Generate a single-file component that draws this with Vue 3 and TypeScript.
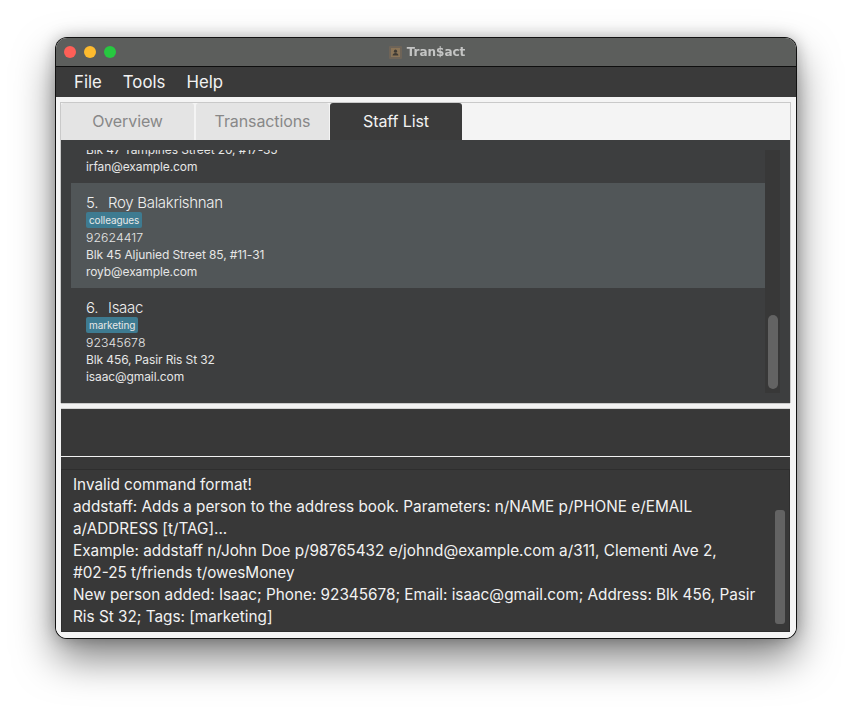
<script setup lang="ts">
interface Staff { index: number; name: string; tag: string; phone: string; address: string; email: string; selected?: boolean }
const staff: Staff[] = [
  { index: 4, name: 'Irfan Ibrahim', tag: 'classmates', phone: '92492021', address: 'Blk 47 Tampines Street 20, #17-35', email: 'irfan@example.com' },
  { index: 5, name: 'Roy Balakrishnan', tag: 'colleagues', phone: '92624417', address: 'Blk 45 Aljunied Street 85, #11-31', email: 'royb@example.com', selected: true },
  { index: 6, name: 'Isaac', tag: 'marketing', phone: '92345678', address: 'Blk 456, Pasir Ris St 32', email: 'isaac@gmail.com' }
]
const tabs = ['Overview', 'Transactions', 'Staff List']
const resultLines = [
  'Invalid command format!',
  'addstaff: Adds a person to the address book. Parameters: n/NAME p/PHONE e/EMAIL',
  'a/ADDRESS [t/TAG]...',
  'Example: addstaff n/John Doe p/98765432 e/johnd@example.com a/311, Clementi Ave 2,',
  '#02-25 t/friends t/owesMoney',
  'New person added: Isaac; Phone: 92345678; Email: isaac@gmail.com; Address: Blk 456, Pasir',
  'Ris St 32; Tags: [marketing]'
]
</script>

<template>
  <div class="page">
    <div class="window">
      <header class="titlebar">
        <div class="lights">
          <span class="light red"></span>
          <span class="light yellow"></span>
          <span class="light green"></span>
        </div>
        <div class="title">
          <svg class="app-icon" width="13" height="13" viewBox="0 0 13 13">
            <rect width="13" height="13" rx="1" fill="#6e6458" />
            <rect x="2" y="2" width="9" height="9" fill="#8b7558" />
            <circle cx="6.5" cy="5.2" r="1.6" fill="#3e3a34" />
            <path d="M3.6 9.6h5.8c0-1.6-1.2-2.5-2.9-2.5s-2.9.9-2.9 2.5z" fill="#3e3a34" />
          </svg>
          <span>Tran$act</span>
        </div>
        <div></div>
      </header>
      <nav class="menubar">
        <span>File</span>
        <span>Tools</span>
        <span>Help</span>
      </nav>
      <main class="body">
        <section class="tabpane">
          <div class="tabs">
            <div v-for="(t, i) in tabs" :key="t" class="tab" :class="{ active: i === 2 }">{{ t }}</div>
          </div>
          <div class="listarea">
            <div class="list">
              <article v-for="p in staff" :key="p.index" class="card" :class="{ selected: p.selected }">
                <div class="name"><span class="num">{{ p.index }}.</span>{{ p.name }}</div>
                <div class="tagrow"><span class="tag">{{ p.tag }}</span></div>
                <div class="line phone">{{ p.phone }}</div>
                <div class="line">{{ p.address }}</div>
                <div class="line">{{ p.email }}</div>
              </article>
            </div>
            <div class="track"><div class="thumb"></div></div>
          </div>
        </section>
        <div class="divider"></div>
        <div class="command"></div>
        <div class="resultwrap">
          <div class="result">
            <div class="resulttext">
              <div v-for="l in resultLines" :key="l">{{ l }}</div>
            </div>
            <div class="rtrack"><div class="rthumb"></div></div>
          </div>
        </div>
      </main>
    </div>
  </div>
</template>

<style>
html, body { margin: 0; background: #fff; }
</style>

<style scoped>
.page {
  width: 852px;
  height: 712px;
  box-sizing: border-box;
  padding: 38px 56px 74px;
  overflow: hidden;
  font-family: Inter, "Liberation Sans", sans-serif;
  background: #fff;
}
.window {
  width: 740px;
  height: 600px;
  display: flex;
  flex-direction: column;
  border-radius: 11px;
  overflow: hidden;
  box-shadow: 0 0 0 1px #111, 0 20px 40px rgba(0, 0, 0, 0.5), 0 0 16px rgba(0, 0, 0, 0.28);
  background: #f4f4f4;
}
.titlebar {
  height: 28px;
  flex: none;
  display: grid;
  grid-template-columns: 1fr auto 1fr;
  align-items: center;
  background: #5c5e5c;
  border-bottom: 1px solid #0e0e0e;
}
.lights { display: flex; gap: 8px; padding-left: 8px; }
.light { width: 12px; height: 12px; border-radius: 50%; }
.red { background: #fe5f57; }
.yellow { background: #febb2e; }
.green { background: #27c840; }
.title {
  display: flex;
  align-items: center;
  gap: 5px;
  color: #c4c5c4;
  font-size: 12px;
  font-weight: 700;
  font-family: "DejaVu Sans", sans-serif;
  margin-left: 2px;
  filter: blur(0.3px);
}
.app-icon { flex: none; }
.menubar {
  height: 30px;
  flex: none;
  display: flex;
  align-items: center;
  gap: 21px;
  padding-left: 18px;
  background: #3a3a3a;
  color: #f2f2f2;
  font-size: 16.8px;
}
.body {
  flex: 1;
  min-height: 0;
  display: flex;
  flex-direction: column;
  padding: 5px 5px 6px 4px;
  background: #f4f4f4;
}
.tabpane {
  height: 301px;
  flex: none;
  box-sizing: border-box;
  border: 1px solid #c9c9c9;
  border-bottom: 0;
  display: flex;
  flex-direction: column;
  background: #f4f4f4;
}
.tabs { height: 37px; flex: none; display: flex; }
.tab {
  width: 133px;
  box-sizing: border-box;
  padding-bottom: 1px;
  margin-right: 2px;
  display: flex;
  align-items: center;
  justify-content: center;
  background: #e4e4e4;
  color: #888;
  font-size: 16px;
  letter-spacing: -0.1px;
  border-radius: 3px 3px 0 0;
}
.tab:nth-child(2) { margin-right: 1px; }
.tab.active { width: 132px; background: #3b3b3b; color: #f2f2f2; }
.listarea {
  flex: 1;
  min-height: 0;
  display: flex;
  padding: 10px;
  background: #3d3e3f;
}
.list {
  flex: 1;
  min-width: 0;
  display: flex;
  flex-direction: column;
  justify-content: flex-end;
  overflow: hidden;
}
.card {
  height: 105px;
  flex: none;
  box-sizing: border-box;
  padding: 10px 15px 0;
  color: #f0f0f0;
}
.card.selected { background: #515658; }
.name {
  font-size: 15px;
  font-weight: 300;
  letter-spacing: -0.3px;
  line-height: 19px;
  height: 19px;
  white-space: pre;
  color: #efefef;
}
.num { display: inline-block; width: 22px; }
.tagrow { height: 17px; display: flex; align-items: flex-start; }
.tag {
  font-size: 10px;
  letter-spacing: -0.1px;
  line-height: 16px;
  padding: 0 3px;
  border-radius: 2px;
  background: #3e7b91;
  color: #e8e8e8;
}
.line { font-size: 12px; letter-spacing: -0.1px; line-height: 17px; height: 17px; color: #e6e6e6; }
.line.phone { font-size: 12.3px; letter-spacing: 0.05px; font-weight: 300; }
.track { width: 15px; flex: none; display: flex; flex-direction: column; justify-content: flex-end; background: #383838; }
.thumb { width: 10px; height: 74px; margin: 0 0 4px 3px; border-radius: 5px; background: #636363; }
.divider {
  height: 6px;
  flex: none;
  margin: 0 1px;
  box-sizing: border-box;
  border-top: 1px solid #c9c9c9;
  border-bottom: 1px solid #d4d4d4;
  background: #f2f2f2;
}
.command {
  height: 47px;
  flex: none;
  margin: 0 1px;
  background: #383838;
  border-bottom: 1px solid #f2f2f2;
}
.resultwrap {
  flex: 1;
  min-height: 0;
  margin: 0 1px;
  padding-top: 12px;
  background: #383838;
  display: flex;
}
.result {
  flex: 1;
  min-width: 0;
  box-sizing: border-box;
  display: flex;
  border: 1px solid #2e2e2e;
  padding: 4px 4px 7px 11px;
  color: #f2f2f2;
  font-size: 15.3px;
  line-height: 22px;
}
.resulttext { flex: 1; min-width: 0; white-space: nowrap; }
.rtrack { width: 10px; flex: none; display: flex; flex-direction: column; justify-content: flex-end; }
.rthumb { width: 10px; height: 114px; border-radius: 3px; background: #636363; }
</style>
